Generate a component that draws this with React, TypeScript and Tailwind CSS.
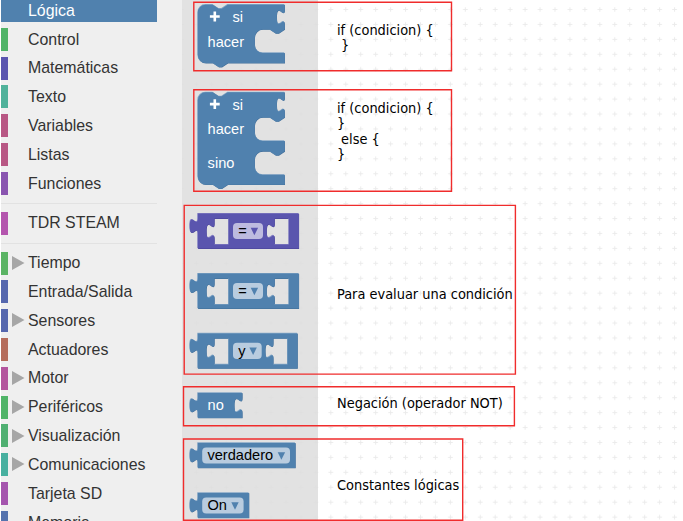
import React from "react";

type Category = { name: string; color: string; nested?: boolean; selected?: boolean };

const basicCategories: Category[] = [
  { name: "Lógica", color: "bg-[#5081ae]", selected: true },
  { name: "Control", color: "bg-[#50b468]" },
  { name: "Matemáticas", color: "bg-[#5a55af]" },
  { name: "Texto", color: "bg-[#50b29b]" },
  { name: "Variables", color: "bg-[#b85784]" },
  { name: "Listas", color: "bg-[#b85784]" },
  { name: "Funciones", color: "bg-[#8a55b0]" },
];

const deviceCategories: Category[] = [
  { name: "Tiempo", color: "bg-[#5bb464]", nested: true },
  { name: "Entrada/Salida", color: "bg-[#5567ae]" },
  { name: "Sensores", color: "bg-[#5567ae]", nested: true },
  { name: "Actuadores", color: "bg-[#b56d5c]" },
  { name: "Motor", color: "bg-[#b4559d]", nested: true },
  { name: "Periféricos", color: "bg-[#50b468]", nested: true },
  { name: "Visualización", color: "bg-[#50b072]", nested: true },
  { name: "Comunicaciones", color: "bg-[#48b0a0]", nested: true },
  { name: "Tarjeta SD", color: "bg-[#a555ae]" },
  { name: "Memoria", color: "bg-[#5573ae]" },
];

function CategoryRow({ name, color, nested, selected }: Category) {
  return (
    <div
      className={`mb-[5.82px] flex h-[23px] shrink-0 items-center ${
        selected ? "w-[156px] bg-[#5081ae] text-white" : "text-[#333]"
      }`}
    >
      <div className={`h-full w-[7px] ${color}`} />
      <div className="flex w-5 pb-[0.5px] pl-1">
        {nested && (
          <svg width="13" height="14" viewBox="0 0 13 14">
            <path d="M0 0 12.5 7 0 14z" fill="#a6a6a6" />
          </svg>
        )}
      </div>
      <span className="whitespace-nowrap pb-[0.6px] text-[15.9px] leading-[23px]">{name}</span>
    </div>
  );
}

function Separator() {
  return <div className="mb-2 mt-[2px] h-px w-[156px] shrink-0 bg-[#e2e2e2]" />;
}

const BLUE = "#5081ae";
const PURPLE = "#5a55ae";

const NOTCH_RIGHT = "l6 4h3l6-4";
const NOTCH_LEFT = "l-6 4h-3l-6-4";
const SOCKET = "c0 10-8-8-8 7.5s8-2.5 8 7.5";
const PLUG = "c0-10-8 8-8-7.5s8 2.5 8-7.5";

function Shape({ d, fill }: { d: string; fill: string }) {
  const dark = fill === BLUE ? "#3f6c97" : "#464194";
  const light = fill === BLUE ? "#85a7c6" : "#8c88c6";
  return (
    <g fillRule="evenodd">
      <path d={d} fill={dark} transform="translate(.5 .5)" />
      <path d={d} fill={light} transform="translate(-.3 -.5)" />
      <path d={d} fill={fill} transform="translate(.2 .1)" />
    </g>
  );
}

function Label({ x, y, children, dark }: { x: number; y: number; children: string; dark?: boolean }) {
  return (
    <text x={x} y={y} fontSize="14.6" fill={dark ? "#000" : "#fff"}>
      {children}
    </text>
  );
}

function Statement({ top, slots, bottom }: { top: number; slots: number[]; bottom: number }) {
  const cuts = slots
    .map((y) => `V${y}${NOTCH_LEFT}h-7a8 8 0 0 0-8 8v7.5a8 8 0 0 0 8 8H284.5`)
    .join("");
  const d = `M197.6 ${top + 8}a8 8 0 0 1 8-8h7${NOTCH_RIGHT}H284.5v5${SOCKET}${cuts}V${bottom}H227.6${NOTCH_LEFT}h-7a8 8 0 0 1-8-8z`;
  return (
    <g>
      <Shape d={d} fill={BLUE} />
      <path
        d={`M209.9 ${top + 11.9}h9.8M214.8 ${top + 7}v9.8`}
        stroke="#fff"
        strokeWidth="2.6"
      />
      <Label x={232.5} y={top + 17.4}>si</Label>
    </g>
  );
}

function Dropdown({ x, y, width, fill, label }: { x: number; y: number; width: number; fill: string; label: string }) {
  const tip = x + width - 8.6;
  return (
    <g>
      <rect x={x} y={y} width={width} height="16.2" rx="4" fill="#fff" fillOpacity=".6" />
      <Label x={x + 5.2} y={y + 12.9} dark>{label}</Label>
      <path d={`M${tip - 3.7} ${y + 4.8}h7.4l-3.7 7.6z`} fill={fill} />
    </g>
  );
}

function Comparison({ top, right, fill, label }: { top: number; right: number; fill: string; label: string }) {
  const hole = (x: number) => `M${x} ${top + 5}v5${SOCKET}v6h14.2v-26z`;
  const d = `M197.6 ${top}H${right}v35H197.6V${top + 20}${PLUG}z${hole(214.2)}${hole(right - 24.2)}`;
  return (
    <g>
      <Shape d={d} fill={fill} />
      <Dropdown x={233} y={top + 9.4} width={right - 268.6} fill={fill} label={label} />
    </g>
  );
}

function Constant({ top, right, label }: { top: number; right: number; label: string }) {
  return (
    <g>
      <Shape d={`M197.6 ${top}H${right}v25H197.6V${top + 20}${PLUG}z`} fill={BLUE} />
      <Dropdown x={202.2} y={top + 4.6} width={right - 207.4} fill={BLUE} label={label} />
    </g>
  );
}

function Canvas() {
  return (
    <svg className="absolute inset-0" width="683" height="521" viewBox="0 0 683 521">
      <defs>
        <pattern id="grid" x="323.35" y="2.05" width="14.945" height="14.93" patternUnits="userSpaceOnUse">
          <path d="M5.2 7.45h4.6M7.5 5.2v4.6" stroke="#ebebeb" strokeWidth="1" />
        </pattern>
      </defs>
      <rect x="182" width="501" height="521" fill="url(#grid)" />
      <rect x="182" width="136" height="521" fill="#ddd" fillOpacity=".85" />

      <Statement top={4.6} slots={[29.3]} bottom={63} />
      <Label x={207.6} y={47}>hacer</Label>
      <Statement top={92.2} slots={[117.3, 151.2]} bottom={184.6} />
      <Label x={207.6} y={134}>hacer</Label>
      <Label x={207.6} y={168}>sino</Label>

      <Comparison top={213.5} right={298.6} fill={PURPLE} label="=" />
      <Comparison top={273.5} right={298.6} fill={BLUE} label="=" />
      <Comparison top={333.3} right={297.3} fill={BLUE} label="y" />

      <Shape d={`M197.6 392.8h44.5v5${SOCKET}v5h-44.5v-5${PLUG}z`} fill={BLUE} />
      <Label x={207.6} y={410}>no</Label>

      <Constant top={442.8} right={295.2} label="verdadero" />
      <Constant top={492.8} right={248.8} label="On" />

      <g fill="none" stroke="#f02c2c" strokeWidth="1.4">
        <path d="M193.8 2.2h257.7v68.5H193.8z" />
        <path d="M193.8 89.8h257.7v101.5H193.8z" />
        <path d="M184.2 205.4h331.2v168.7H184.2z" />
        <path d="M183.5 386.7h330.9v39H183.5z" />
        <path d="M183.5 439h279.2v81.2H183.5z" />
      </g>
    </svg>
  );
}

function Caption({ className, children }: { className: string; children: string }) {
  return (
    <div
      className={`absolute left-[337px] whitespace-pre text-[14.42px] leading-[15.4px] text-black font-['DejaVu_Sans_Condensed','DejaVu_Sans',sans-serif] ${className}`}
    >
      {children}
    </div>
  );
}

export default function App() {
  return (
    <div className="relative flex h-[521px] w-[683px] overflow-hidden bg-white font-['Liberation_Sans',Arial,sans-serif]">
      <nav className="ml-px flex h-full w-[181px] flex-col overflow-hidden bg-[#efefef]">
        <div className="-mt-px flex flex-col">
          {basicCategories.map((c) => <CategoryRow key={c.name} {...c} />)}
          <Separator />
          <CategoryRow name="TDR STEAM" color="bg-[#b455ae]" />
          <Separator />
          {deviceCategories.map((c) => <CategoryRow key={c.name} {...c} />)}
        </div>
      </nav>
      <main>
        <Canvas />
        <Caption className="top-[23px]">{"if (condicion) {\n }"}</Caption>
        <Caption className="top-[101px]">{"if (condicion) {\n}\n else {\n}"}</Caption>
        <Caption className="top-[287px]">Para evaluar una condición</Caption>
        <Caption className="top-[396px]">Negación (operador NOT)</Caption>
        <Caption className="top-[478px]">Constantes lógicas</Caption>
      </main>
    </div>
  );
}
